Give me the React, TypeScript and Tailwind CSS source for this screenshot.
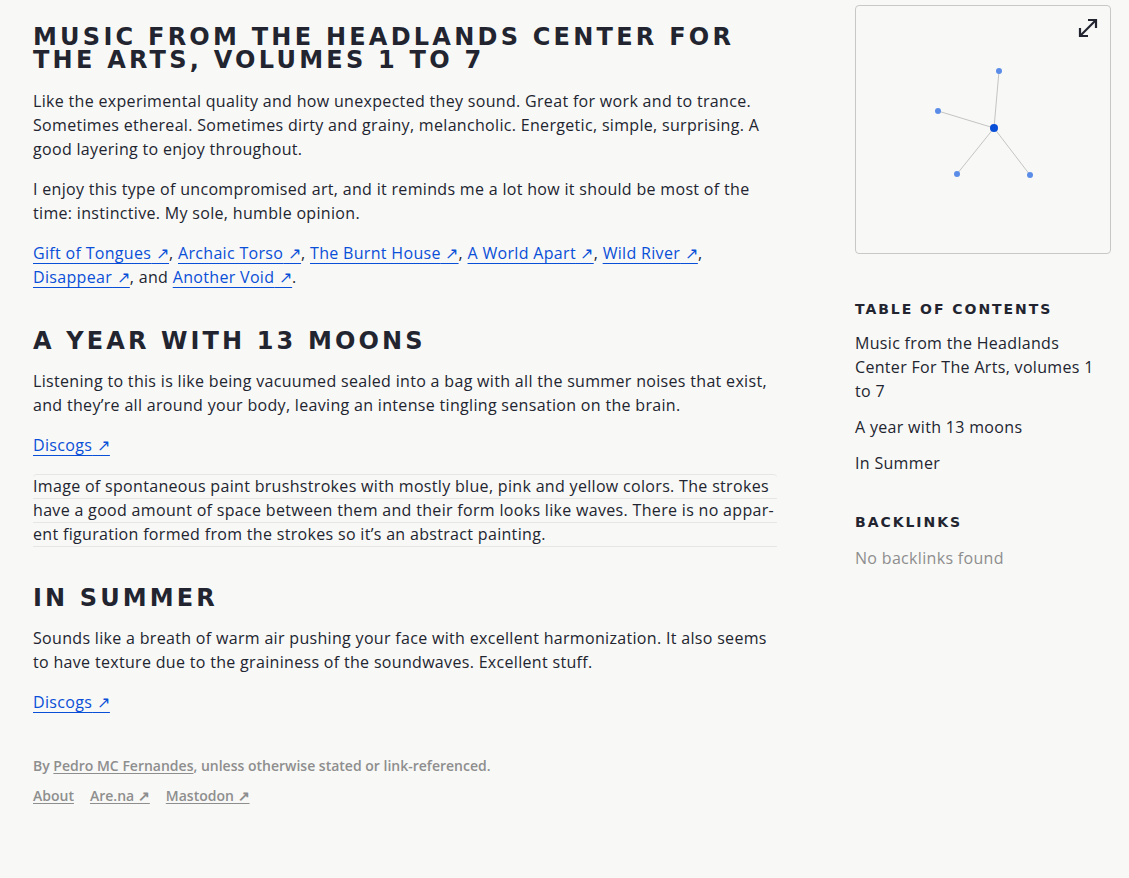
import React from 'react';

const body = "font-['Open_Sans',sans-serif]";
const display = "font-['DejaVu_Sans',sans-serif] font-bold uppercase";

// External link with the small arrow
const Ext = ({ children }: { children: React.ReactNode }) => (
  <a href="#" className="text-[#0a4fd8] underline decoration-1 underline-offset-[4px]">
    {children} ↗
  </a>
);

const Graph = () => {
  const c = { x: 138, y: 122 };
  const leaves = [
    { x: 143, y: 65 },
    { x: 82, y: 105 },
    { x: 101, y: 168 },
    { x: 174, y: 169 },
  ];
  return (
    <div className="relative h-[249px] rounded border border-[#c8c8c6]">
      <svg className="absolute inset-0" width="256" height="249">
        {leaves.map((l, i) => (
          <line key={i} x1={c.x} y1={c.y} x2={l.x} y2={l.y} stroke="#c4c4c4" strokeWidth="1" />
        ))}
        {leaves.map((l, i) => (
          <circle key={i} cx={l.x} cy={l.y} r="3" fill="#5b8de8" />
        ))}
        <circle cx={c.x} cy={c.y} r="4" fill="#0a4fd8" />
      </svg>
      <svg className="absolute right-[11px] top-[11px]" width="22" height="22" viewBox="0 0 22 22" fill="none" stroke="#222530" strokeWidth="2.2">
        <path d="M3 19 L19 3" />
        <path d="M11 3 H19 V11" />
        <path d="M3 11 V19 H11" />
      </svg>
    </div>
  );
};

export default function App() {
  return (
    <div className={`min-h-[878px] bg-[#f8f8f6] text-[#222530] ${body}`}>
      <div className="flex pl-[33px] pr-[18px]">
        <main className="w-[744px] pt-[26px]">
          <h1 className={`${display} text-[24px] leading-[23px] tracking-[0.135em]`}>
            Music from the Headlands Center For the Arts, volumes 1 to 7
          </h1>
          <div className="mt-[17px] space-y-4 text-[16px] leading-6 tracking-[0.02em]">
            <p>
              Like the experimental quality and how unexpected they sound. Great for work and to trance.
              Sometimes ethereal. Sometimes dirty and grainy, melancholic. Energetic, simple, surprising. A
              good layering to enjoy throughout.
            </p>
            <p>
              I enjoy this type of uncompromised art, and it reminds me a lot how it should be most of the
              time: instinctive. My sole, humble opinion.
            </p>
            <p>
              <Ext>Gift of Tongues</Ext>, <Ext>Archaic Torso</Ext>, <Ext>The Burnt House</Ext>,{' '}
              <Ext>A World Apart</Ext>, <Ext>Wild River</Ext>, <Ext>Disappear</Ext>, and{' '}
              <Ext>Another Void</Ext>.
            </p>
          </div>

          <h2 className={`${display} mt-[41px] text-[24px] leading-[23px] tracking-[0.13em]`}>
            A year with 13 moons
          </h2>
          <div className="mt-[16px] space-y-4 text-[16px] leading-6 tracking-[0.02em]">
            <p>
              Listening to this is like being vacuumed sealed into a bag with all the summer noises that exist,
              and they’re all around your body, leaving an intense tingling sensation on the brain.
            </p>
            <p>
              <Ext>Discogs</Ext>
            </p>
            <div className="!mt-[17px] rounded-t border-t border-[#e6e6e3]">
              {[
                'Image of spontaneous paint brushstrokes with mostly blue, pink and yellow colors. The strokes',
                'have a good amount of space between them and their form looks like waves. There is no appar-',
                'ent figuration formed from the strokes so it’s an abstract painting.',
              ].map((t) => (
                <div key={t} className="whitespace-nowrap border-b border-[#e6e6e3] leading-[23px]">
                  {t}
                </div>
              ))}
            </div>
          </div>

          <h2 className={`${display} mt-[40px] text-[24px] leading-[23px] tracking-[0.13em]`}>
            In Summer
          </h2>
          <div className="mt-[16px] space-y-4 text-[16px] leading-6 tracking-[0.02em]">
            <p>
              Sounds like a breath of warm air pushing your face with excellent harmonization. It also seems
              to have texture due to the graininess of the soundwaves. Excellent stuff.
            </p>
            <p>
              <Ext>Discogs</Ext>
            </p>
          </div>

          <footer className="mt-[42px] text-[14px] font-semibold leading-5 text-[#8e8e8e]">
            <p>
              By <a href="#" className="underline underline-offset-2">Pedro MC Fernandes</a>, unless otherwise
              stated or link-referenced.
            </p>
            <div className="mt-[10px] flex gap-4">
              <a href="#" className="underline underline-offset-2">About</a>
              <a href="#" className="underline underline-offset-2">Are.na ↗</a>
              <a href="#" className="underline underline-offset-2">Mastodon ↗</a>
            </div>
          </footer>
        </main>

        <aside className="ml-auto w-[256px] pt-[5px]">
          <Graph />
          <h3 className={`${display} mt-[45px] text-[14px] leading-5 tracking-[0.14em]`}>
            Table of contents
          </h3>
          <ul className="mt-[12px] space-y-3 text-[16px] leading-6 tracking-[0.02em]">
            <li>Music from the Headlands Center For The Arts, volumes 1 to 7</li>
            <li>A year with 13 moons</li>
            <li>In Summer</li>
          </ul>
          <h3 className={`${display} mt-[37px] text-[14px] leading-5 tracking-[0.14em]`}>
            Backlinks
          </h3>
          <p className="mt-[14px] text-[16px] leading-6 tracking-[0.02em] text-[#8e8e8e]">No backlinks found</p>
        </aside>
      </div>
    </div>
  );
}
